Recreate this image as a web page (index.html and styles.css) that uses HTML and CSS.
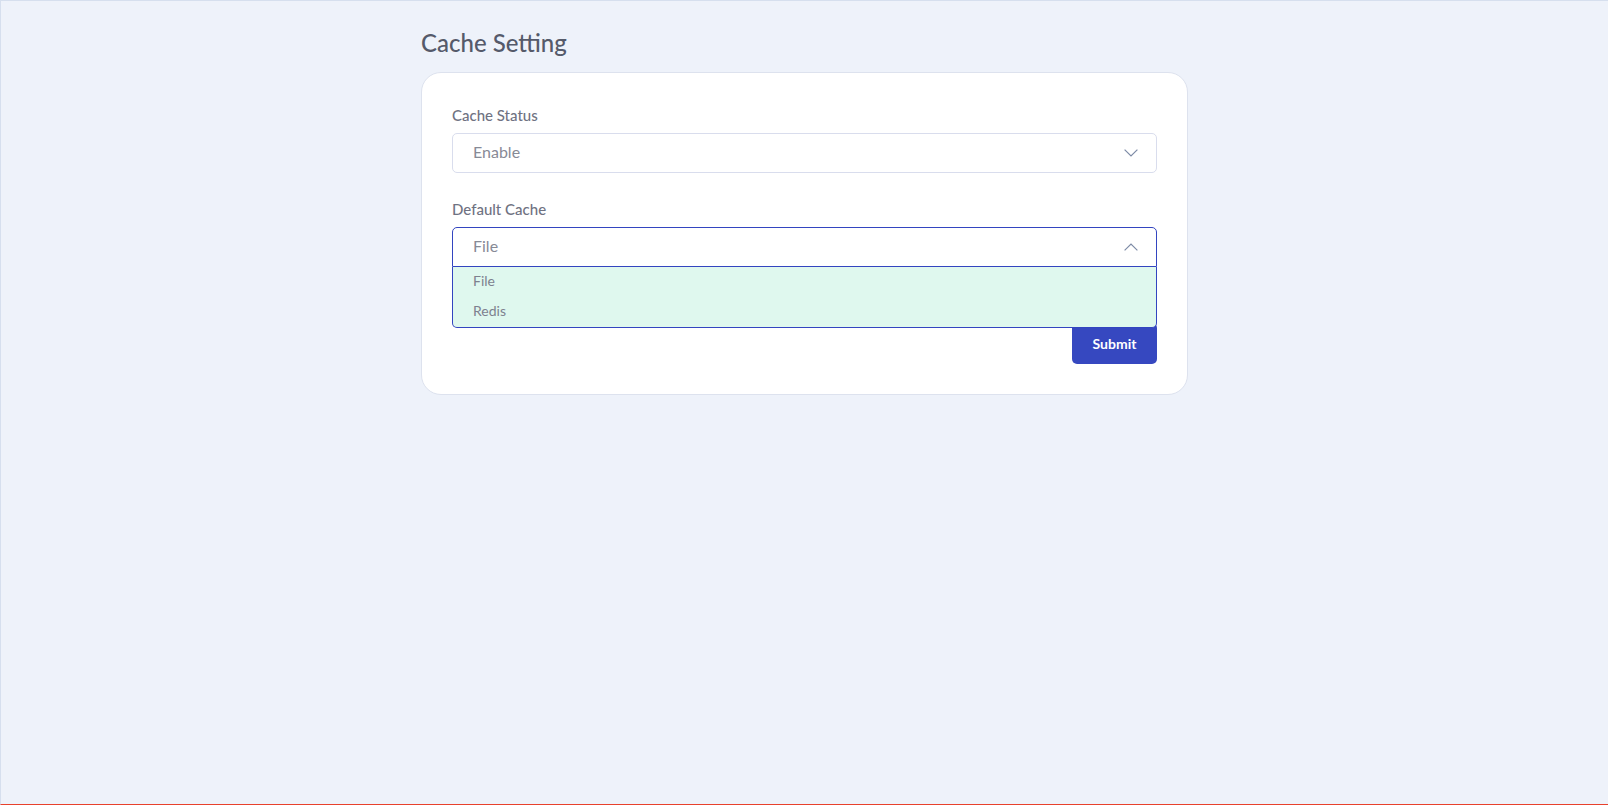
FILE: index.html
```html
<!DOCTYPE html>
<html lang="en">
<head>
<meta charset="utf-8">
<title>Cache Setting</title>
<link rel="stylesheet" href="styles.css">
</head>
<body>
<div class="page">
  <div class="container">
    <h1 class="page-title">Cache Setting</h1>
    <div class="card">
      <div class="form-group">
        <label class="form-label">Cache Status</label>
        <div class="select">
          <div class="select-head">
            <span class="select-value">Enable</span>
            <svg class="chevron" width="14" height="8" viewBox="0 0 14 8"><path d="M0.6 0.6 L7 7 L13.4 0.6" fill="none" stroke="#7d8ba6" stroke-width="1.2"/></svg>
          </div>
        </div>
      </div>
      <div class="form-group">
        <label class="form-label">Default Cache</label>
        <div class="select open">
          <div class="select-head">
            <span class="select-value">File</span>
            <svg class="chevron" width="14" height="8" viewBox="0 0 14 8"><path d="M0.6 7.4 L7 1 L13.4 7.4" fill="none" stroke="#7d8ba6" stroke-width="1.2"/></svg>
          </div>
          <ul class="select-list">
            <li class="select-option">File</li>
            <li class="select-option">Redis</li>
          </ul>
        </div>
      </div>
      <div class="actions">
        <button class="btn-submit" type="button">Submit</button>
      </div>
    </div>
  </div>
</div>
</body>
</html>
```

FILE: styles.css
```css
html, body {
  margin: 0;
  padding: 0;
}
body {
  font-family: "Lato", "Liberation Sans", sans-serif;
  background: #eef2fa;
}
.page {
  box-sizing: border-box;
  min-height: 100vh;
  border-top: 1px solid #d6dfee;
  border-left: 1px solid #d6dfee;
  border-bottom: 1px solid #e8412c;
  padding-top: 27px;
}
.container {
  width: 767px;
  margin: 0 auto;
}
.page-title {
  margin: 0 0 14px;
  font-size: 24px;
  line-height: 30px;
  font-weight: 500;
  color: #555a6a;
}
.card {
  background: #ffffff;
  border: 1px solid #dde2ee;
  border-radius: 20px;
  padding: 31px 30px 30px;
}
.form-group {
  margin-bottom: 25px;
}
.form-group:last-of-type {
  margin-bottom: 0;
}
.form-label {
  display: block;
  font-size: 15px;
  line-height: 22px;
  font-weight: 500;
  color: #6f7282;
  margin-bottom: 7px;
}
.select {
  position: relative;
}
.select-head {
  box-sizing: border-box;
  height: 40px;
  border: 1px solid #d9dded;
  border-radius: 5px;
  display: flex;
  align-items: center;
  justify-content: space-between;
  padding: 0 18px 0 20px;
}
.select-value {
  font-size: 16px;
  line-height: 20px;
  padding-bottom: 3px;
  color: #878a96;
}
.select.open .select-head {
  border-color: #3345c0;
  border-radius: 5px 5px 0 0;
}
.select-list {
  position: absolute;
  left: 0;
  right: 0;
  top: 100%;
  margin: 0;
  padding: 0;
  list-style: none;
  background: #dff8ee;
  border: 1px solid #3345c0;
  border-top: none;
  border-radius: 0 0 5px 5px;
  z-index: 2;
}
.select-option {
  height: 30px;
  line-height: 28px;
  padding-left: 20px;
  font-size: 14px;
  color: #7d818e;
}
.actions {
  display: flex;
  justify-content: flex-end;
  margin-top: 56px;
}
.btn-submit {
  height: 41px;
  width: 85px;
  border: none;
  border-radius: 5px;
  background: #3648c0;
  color: #ffffff;
  font-family: "Lato", "Liberation Sans", sans-serif;
  font-size: 14px;
  font-weight: 700;
  cursor: pointer;
}
```
